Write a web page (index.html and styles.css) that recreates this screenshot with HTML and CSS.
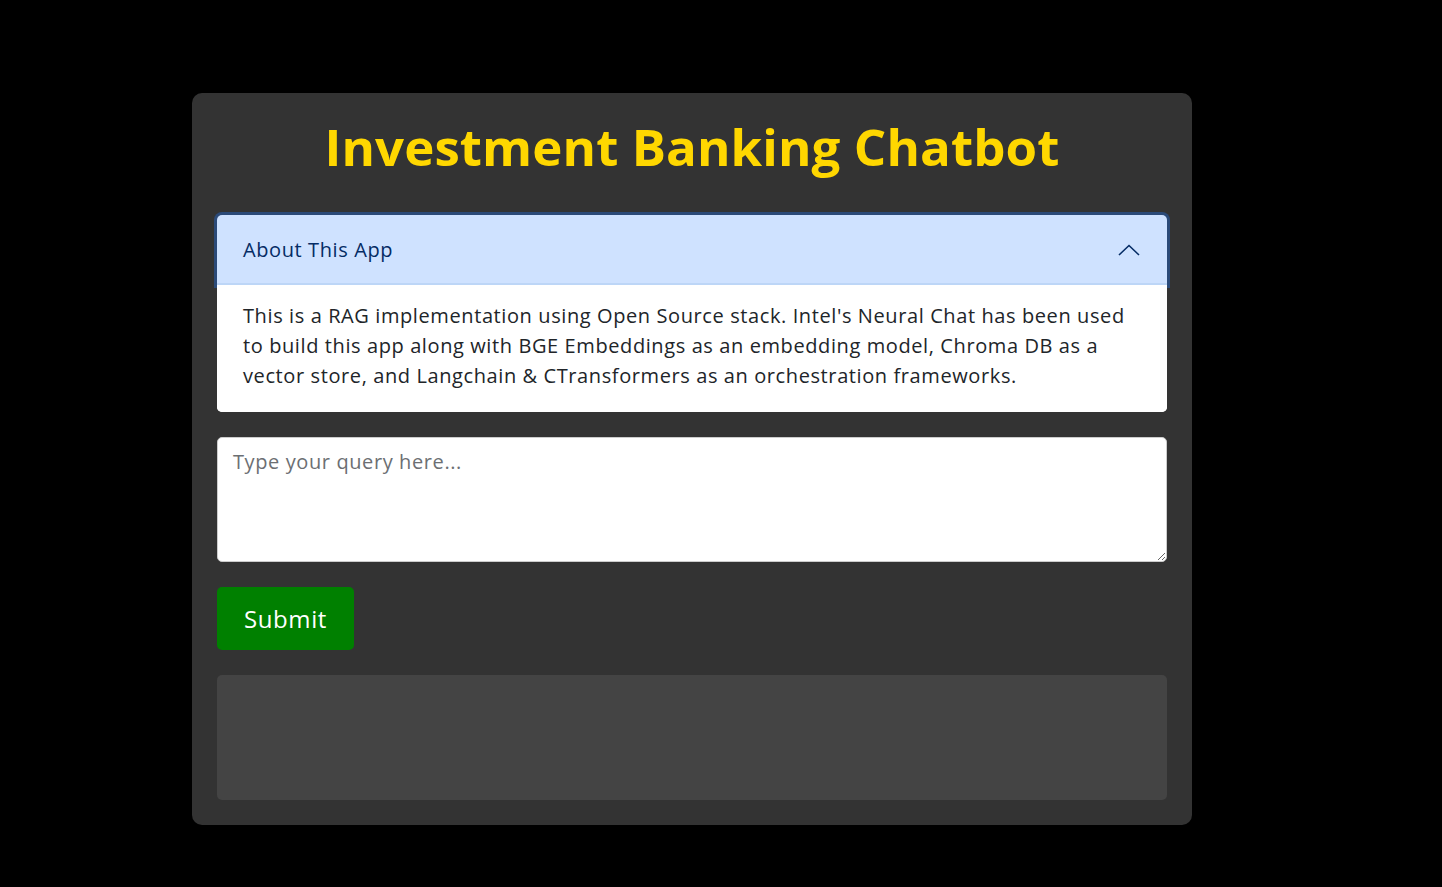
FILE: index.html
```html
<!DOCTYPE html>
<html lang="en">
<head>
<meta charset="utf-8">
<title>Investment Banking Chatbot</title>
<link rel="stylesheet" href="styles.css">
</head>
<body>
<main class="card">
  <h1 class="title">Investment Banking Chatbot</h1>
  <section class="accordion">
    <div class="acc-header">
      <span>About This App</span>
      <svg class="chevron" width="22" height="12" viewBox="0 0 22 12" aria-hidden="true"><path d="M1 11 L11 1.5 L21 11" fill="none" stroke="#052c65" stroke-width="1.6"/></svg>
    </div>
    <div class="acc-body">This is a RAG implementation using Open Source stack. Intel's Neural Chat has been used to build this app along with BGE Embeddings as an embedding model, Chroma DB as a vector store, and Langchain &amp; CTransformers as an orchestration frameworks.</div>
  </section>
  <textarea class="query" placeholder="Type your query here..."></textarea>
  <div><button class="submit" type="button">Submit</button></div>
  <div class="output"></div>
</main>
</body>
</html>
```
FILE: styles.css
```css
html { font-size: 20px; }
body {
  margin: 0;
  background: #000;
  font-family: "Open Sans", "Liberation Sans", sans-serif;
  letter-spacing: 0.6px;
  min-height: 887px;
}
.card {
  width: 1000px;
  box-sizing: border-box;
  margin: 93px 0 0 192px;
  background: #333;
  border-radius: 10px;
  padding: 25px;
  display: flex;
  flex-direction: column;
  gap: 25px;
}
.title {
  margin: 0;
  color: #ffd700;
  text-align: center;
  font-size: 51px;
  font-weight: 700;
  letter-spacing: 0.1px;
  line-height: 56px;
  height: 72px;
}
.accordion {
  border-radius: 5px;
  background: #fff;
}
.acc-header {
  background: #cfe2ff;
  color: #052c65;
  display: flex;
  justify-content: space-between;
  align-items: center;
  padding: 0 26px 0 26px;
  height: 70px;
  line-height: 30px;
  font-size: 20px;
  box-shadow: 0 0 0 3px #2b4a78, inset 0 -2px 0 #bdd6f7;
  border-radius: 5px 5px 0 0;
}
.chevron { margin-right: 1px; }
.acc-body {
  position: relative;
  background: #fff;
  border-radius: 0 0 5px 5px;
  padding: 16px 25px 21px 26px;
  font-size: 20px;
  line-height: 30px;
  color: #212529;
}
.query {
  display: block;
  width: 100%;
  box-sizing: border-box;
  height: 125px;
  border: 1px solid #ccc;
  border-radius: 5px;
  padding: 10px 15px;
  font-family: inherit;
  letter-spacing: inherit;
  font-size: 20px;
  line-height: 28px;
  resize: vertical;
}
.query::placeholder { color: #6c6f73; }
.submit {
  background: #008000;
  color: #fff;
  border: none;
  border-radius: 5px;
  font-family: inherit;
  letter-spacing: inherit;
  font-size: 24px;
  height: 63px;
  padding: 0 27px;
}
.output {
  background: #444;
  border-radius: 5px;
  height: 125px;
}
```
